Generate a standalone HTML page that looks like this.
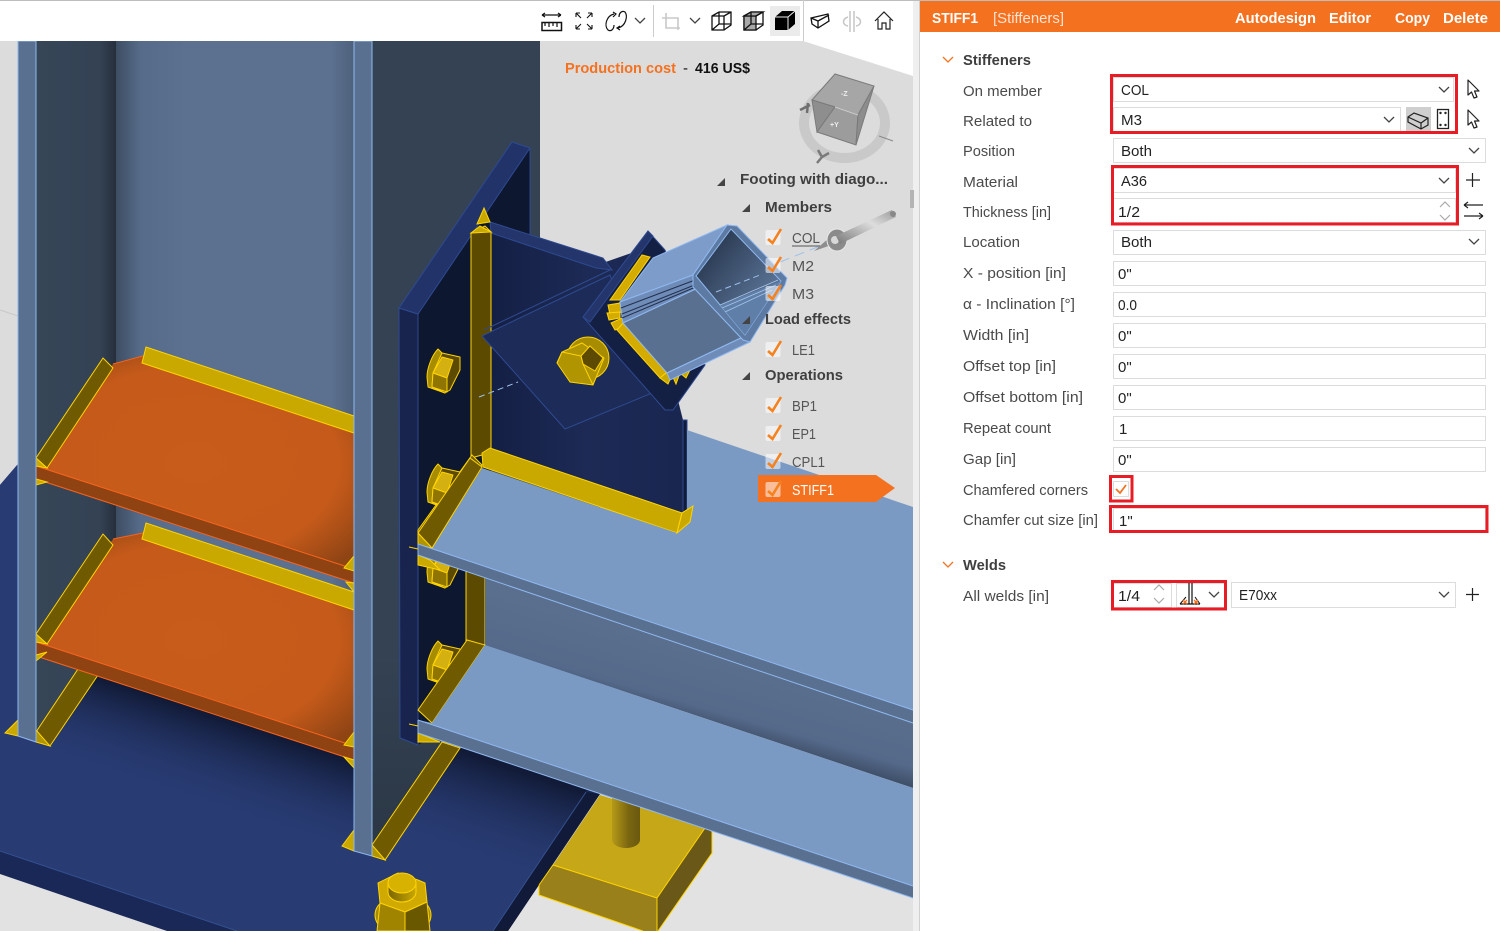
<!DOCTYPE html>
<html><head><meta charset="utf-8"><title>STIFF1</title>
<style>html,body{margin:0;padding:0;background:#fff;width:1500px;height:931px;overflow:hidden}svg{display:block}text{font-family:"Liberation Sans",sans-serif;font-size:15px;fill:#4a4a4a}.b{font-weight:bold}.v{fill:#222}.w{fill:#fff}.t{fill:#555}.h{font-weight:bold;fill:#3f3f3f}</style></head><body>
<svg xmlns="http://www.w3.org/2000/svg" width="1500" height="931" viewBox="0 0 1500 931">
<defs>
<linearGradient id="web" x1="0" x2="1" y1="0" y2="0"><stop offset="0" stop-color="#3d4d62"/><stop offset=".1" stop-color="#566b89"/><stop offset=".3" stop-color="#5c7190"/><stop offset=".9" stop-color="#5c7190"/><stop offset="1" stop-color="#4e617c"/></linearGradient>
<linearGradient id="dk" x1="0" x2="1" y1="0" y2="0"><stop offset="0" stop-color="#364657"/><stop offset=".8" stop-color="#344254"/><stop offset="1" stop-color="#262f3c"/></linearGradient>
<linearGradient id="dk2" gradientUnits="userSpaceOnUse" x1="0" y1="650" x2="0" y2="850"><stop offset="0" stop-color="#344254"/><stop offset="1" stop-color="#2b3745"/></linearGradient>
<radialGradient id="or" cx=".5" cy=".5" r=".65"><stop offset="0" stop-color="#c85c1a"/><stop offset=".7" stop-color="#c55a1a"/><stop offset="1" stop-color="#8f4414"/></radialGradient>
<linearGradient id="shade" gradientUnits="userSpaceOnUse" x1="190" y1="708" x2="162" y2="793"><stop offset="0" stop-color="#111a36"/><stop offset="1" stop-color="#273a70" stop-opacity="0"/></linearGradient>
<linearGradient id="shade2" gradientUnits="userSpaceOnUse" x1="500" y1="763" x2="468" y2="858"><stop offset="0" stop-color="#111a36"/><stop offset="1" stop-color="#273a70" stop-opacity="0"/></linearGradient>
<linearGradient id="wb" gradientUnits="userSpaceOnUse" x1="700" y1="650" x2="680" y2="720"><stop offset="0" stop-color="#5a6f8d"/><stop offset=".75" stop-color="#55698a"/><stop offset="1" stop-color="#3f5069"/></linearGradient>
<linearGradient id="hol" x1="0" x2="1" y1="0" y2="1"><stop offset="0" stop-color="#1d2a40"/><stop offset="1" stop-color="#6f8cb2"/></linearGradient>
<linearGradient id="rod" x1="0" x2="1"><stop offset="0" stop-color="#b59a18"/><stop offset=".6" stop-color="#7a6510"/><stop offset="1" stop-color="#6a5810"/></linearGradient>
<linearGradient id="cyl" x1="0" x2="1"><stop offset="0" stop-color="#7a6400"/><stop offset="1" stop-color="#c9a800"/></linearGradient>
<linearGradient id="gus" x1="0" x2="1" y1="0" y2="0"><stop offset="0" stop-color="#141f44"/><stop offset=".5" stop-color="#1c2a55"/><stop offset="1" stop-color="#192650"/></linearGradient>
<linearGradient id="needle" x1="0" x2="1" y1="1" y2="0"><stop offset="0" stop-color="#777"/><stop offset=".6" stop-color="#ddd"/><stop offset="1" stop-color="#999"/></linearGradient>
<g id="bolt" stroke="#ffd400" stroke-width="1" stroke-linejoin="round">
<path d="M-6 -21 C-12 -15 -17 -2 -17 7 L-16 17 L1 23 L-2 -17 Z" fill="#a88c00"/>
<path d="M-2 -17 L16 -13 L16 0 L6 20 L1 23 L-12 17 L-11 3 Z" fill="#5c4a00"/>
<polygon points="-11,3 -2,-13 9,-10 3,8" fill="#d4b010"/>
<polygon points="-11,3 3,8 3,22 -12,17" fill="#8f7400"/>
</g>
<g id="ck"><rect x="-7.500" y="-7" width="15" height="15" rx="2" fill="#fff" fill-opacity=".55"/><path d="M-5 2 L-.5 6 L8 -8" fill="none" stroke="#f5821f" stroke-width="2.600"/></g>
<path id="chev" d="M0 0 L5 5 L10 0" fill="none" stroke="#444" stroke-width="1.300"/>
<g id="cur"><path d="M0 0 L0 15 L3.500 12 L6 18 L9 17 L6.500 11 L11 11 Z" fill="#fff" stroke="#222" stroke-width="1.200" stroke-linejoin="round"/></g>
</defs>

<!-- viewport background -->
<rect x="0" y="0" width="1500" height="931" fill="#fff"/>
<rect x="0" y="41" width="913" height="890" fill="#dcdcdc"/>
<rect x="0" y="600" width="913" height="331" fill="#e2e2e2"/>
<polygon points="803,41 913,76 913,41" fill="#fff"/>
<path d="M0 310 L18 316" stroke="#c8c8c8" fill="none"/>

<!-- floor plate -->
<polygon points="0,485 18,464 600,464 600,794 508,931 167,931 0,874" fill="#1a2858"/>
<polygon points="0,485 18,464 590,464 586,792 493,931 237,931 0,851" fill="#283b73"/>
<polygon points="36,656 354,760 354,900 36,900" fill="url(#shade)"/>
<polygon points="372,700 600,760 586,792 493,931 372,931" fill="url(#shade2)"/>
<polygon points="586,792 600,794 508,931 493,931" fill="#111a38"/>
<path d="M586 792 L493 931 M0 851 L237 931" stroke="#34508f" fill="none"/>

<!-- anchor block -->
<polygon points="553,865 539,885 539,895 643,931 657,931 657,898" fill="#99801a"/>
<polygon points="600,795 705,828 657,898 553,865" fill="#c6a718"/>
<polygon points="657,898 705,828 712,832 712,853 658,931 657,931" fill="#6a5818"/>
<path d="M553 865 L657 898 L705 828 M657 898 L657 931 M539 885 L539 895 L643 931 M712 832 L712 853 L658 931 M539 885 L553 865" fill="none" stroke="#ffd400"/>
<path d="M612 790 L612 840 A14 8 0 0 0 640 840 L640 790 Z" fill="url(#rod)"/>

<!-- column webs -->
<polygon points="36,41 116,41 116,675 98,675 50,746 36,742" fill="url(#dk)"/>
<polygon points="116,41 354,41 354,750 116,672" fill="url(#web)"/>
<polygon points="372,41 540,41 540,300 470,300 470,740 460,748 385,860 372,856" fill="url(#dk2)"/>
<rect x="372" y="41" width="168" height="620" fill="#344254"/>

<!-- left column foot stiffeners -->
<polygon points="36,732 78,669 98,675 50,746" fill="#6f5a00" stroke="#ffd400"/>
<polygon points="372,845 442,742 460,748 385,860" fill="#6f5a00" stroke="#ffd400"/>
<polygon points="18,720 18,736 5,733" fill="#c9a800" stroke="#ffd400"/>
<polygon points="36,730 50,746 36,742" fill="#b09400" stroke="#ffd400"/>
<polygon points="354,830 354,851 342,846" fill="#c9a800" stroke="#ffd400"/>
<polygon points="372,845 385,860 372,856" fill="#b09400" stroke="#ffd400"/>

<!-- stiffener 2 (lower) -->
<polygon points="36,642 47,644 113,539 143,533 354,610 354,746" fill="url(#or)"/>
<polygon points="36,642 354,746 354,760 36,656" fill="#8f4212" stroke="#f5641e" stroke-width="1"/>
<path d="M113 539 L143 533" stroke="#f5641e"/>
<polygon points="36,634 103,534 113,545 47,644" fill="#6f5a00" stroke="#ffd400"/>
<polygon points="142,539 146,523 354,592 354,610" fill="#c9a800" stroke="#ffd400"/>
<path d="M36 634 L47 644 L36 642 Z M36 655 L47 652 L36 661 Z M354 732 L344 745 L354 747 Z M354 760 L344 757 L354 768 Z" fill="#c9a800" stroke="#ffd400"/>
<path d="M27 645 L36 647 M354 755 L364 757" stroke="#ffd400"/>

<!-- stiffener 1 (upper) -->
<polygon points="36,466 47,468 113,364 143,356 354,433 354,569" fill="url(#or)"/>
<polygon points="36,466 354,569 354,583 36,479" fill="#8f4212" stroke="#f5641e" stroke-width="1"/>
<path d="M113 364 L143 356" stroke="#f5641e"/>
<polygon points="36,458 103,358 113,368 47,468" fill="#6f5a00" stroke="#ffd400"/>
<polygon points="142,363 146,347 354,416 354,433" fill="#c9a800" stroke="#ffd400"/>
<path d="M36 458 L47 468 L36 466 Z M36 479 L47 482 L36 485 Z M354 556 L344 568 L354 571 Z M354 583 L354 592 L346 582 Z" fill="#c9a800" stroke="#ffd400"/>
<path d="M27 468 L36 470 M354 578 L364 581" stroke="#ffd400"/>

<!-- column flanges -->
<polygon points="18,41 36,41 36,742 18,736" fill="#5a7090" stroke="#8fb8f0"/>
<polygon points="354,41 372,41 372,856 354,851" fill="#5a7090" stroke="#8fb8f0"/>

<!-- end plate -->
<polygon points="418,314 530,148 530,240 491,232 491,700 418,745" fill="#0e1730"/>
<polygon points="399,308 418,314 418,745 400,738" fill="#18244e" stroke="#2f4a90"/>
<polygon points="399,308 512,142 530,148 418,314" fill="#22336a" stroke="#2f4a90"/>
<path d="M530 148 L530 240" stroke="#2f4a90"/>

<!-- gusset + yellow verticals -->
<polygon points="491,232 597,265 640,250 683,420 683,513 491,448" fill="url(#gus)"/>
<polygon points="683,420 687,420 687,513 683,520" fill="#111a38" stroke="#2f4a90"/>
<polygon points="490,222 603,258 612,270 596,268 491,233" fill="#24356c" stroke="#2f4a90"/>
<polygon points="471,233 485,226 491,232 491,448 482,455 471,458" fill="#5c4a00" stroke="#ffd400"/>
<polygon points="484,208 490,222 477,224" fill="#c9a800" stroke="#ffd400"/>
<polygon points="471,233 480,226 491,232" fill="#c9a800" stroke="#ffd400"/>
<polygon points="482,336 610,275 652,393 565,429" fill="#1c2b58" stroke="#2f4a90"/>
<path d="M484 330 L610 270" stroke="#2f4a90"/>
<polygon points="583,317 648,231 665,250 705,365 673,410 665,410" fill="#141f44" stroke="#2f4a90"/>
<polygon points="583,317 648,231 653,236 590,322" fill="#24356c" stroke="#2f4a90"/>

<!-- center bolt -->
<ellipse cx="588" cy="358" rx="21" ry="21" fill="#a88c00" stroke="#ffd400"/>
<polygon points="557,363 562,352 582,343 604,358 593,385 570,382" fill="#b09400" stroke="#ffd400"/>
<polygon points="581,356 590,346 603,358 595,371 583,364" fill="#5c4a00" stroke="#ffd400"/>
<path d="M562 352 L581 356 L583 364 L593 385 M562 352 L557 363" stroke="#ffd400" fill="none"/>

<!-- gusset bottom yellow -->
<polygon points="482,453 490,448 682,513 677,533 483,467" fill="#c9a800" stroke="#ffd400"/>
<polygon points="682,513 693,506 690,522 677,533" fill="#c9a800" stroke="#ffd400"/>

<!-- tube welds -->
<polygon points="610,300 642,255 650,257 620,300" fill="#d4ac00" stroke="#ffd400"/>
<polygon points="608,305 620,303 622,312 610,315" fill="#d4ac00" stroke="#ffd400"/>
<polygon points="607,313 620,312 620,318 609,320" fill="#d4ac00" stroke="#ffd400"/>
<polygon points="611,323 622,318 625,326 615,330" fill="#d4ac00" stroke="#ffd400"/>
<polygon points="617,330 623,323 667,373 660,378" fill="#d4ac00" stroke="#ffd400"/>
<path d="M660 378 L668 384 L672 375 L676 384 L680 373 L686 378 L690 370 L672 368 Z" fill="#c9a800" stroke="#ffd400"/>
<!-- tube -->
<polygon points="653,258 727,225 693,275 620,302" fill="#7d9cc9" stroke="#8fb8f0"/>
<polygon points="620,302 693,275 700,287 623,323" fill="#6f8cb8" stroke="#8fb8f0"/>
<path d="M621 308 L695 280 M622 314 L697 284 M622 318 L698 286" stroke="#22304d" stroke-width="1" fill="none"/>
<polygon points="623,323 700,287 743,337 667,373" fill="#5a7090" stroke="#8fb8f0"/>
<polygon points="667,373 743,337 750,342 670,380" fill="#6f8cb8" stroke="#8fb8f0"/>
<polygon points="727,225 737,226 787,278 785,285 750,342 743,340 693,287 693,275" fill="#5d7aa2" stroke="#8fb8f0"/>
<polygon points="696,276 731,229 781,281 745,335" fill="url(#hol)" stroke="#8fb8f0"/>
<polygon points="720,305 781,281 745,335" fill="#5f7ea8"/>
<path d="M720 305 L778 280 M722 308 L776 285 M725 312 L772 290" stroke="#a9c5ea" stroke-width=".8" fill="none"/>
<path d="M716 292 L760 275" stroke="#9fc0ea" stroke-dasharray="6 4" fill="none"/>
<path d="M479 397 L518 382" stroke="#9fc0ea" stroke-dasharray="6 4" fill="none"/>
<path d="M780 262 L840 238" stroke="#9fc0ea" stroke-dasharray="10 6" fill="none"/>

<!-- lower vertical stiffener & lower bolts -->
<polygon points="466,560 485,560 485,650 466,650" fill="#5c4a00" stroke="#ffd400"/>
<polygon points="418,545 418,530 472,455 482,465 432,548" fill="#6f5a00" stroke="#ffd400"/>
<use href="#bolt" x="444" y="370"/>
<use href="#bolt" x="444" y="485"/>
<use href="#bolt" x="444" y="565"/>
<use href="#bolt" x="444" y="662"/>

<!-- beam -->
<polygon points="485,578 913,723 913,788 485,645" fill="url(#wb)"/>
<polygon points="418,720 418,733 440,742 418,742" fill="#c9a800" stroke="#ffd400"/>
<polygon points="418,710 467,640 485,645 432,723" fill="#6f5a00" stroke="#ffd400"/>
<polygon points="418,720 432,723 485,645 913,788 913,886 418,720" fill="#7a9ac4"/>
<polygon points="432,723 485,645 620,690 560,730" fill="#7a9ac4"/>
<polygon points="418,720 913,886 913,898 418,733" fill="#5a7090"/>
<path d="M418 720 L913 886 M418 733 L913 898 M418 720 L418 733" stroke="#8fb8f0" fill="none"/>
<polygon points="418,555 418,565 440,570 430,560" fill="#c9a800" stroke="#ffd400"/>
<polygon points="417,547 432,548 482,468 677,533 687,513 687,430 913,507 913,710" fill="#7a9ac4"/>
<polygon points="418,533 470,458 482,467 432,548" fill="#6f5a00" stroke="#ffd400"/>
<polygon points="418,533 432,548 418,545" fill="#b09400" stroke="#ffd400"/>
<polygon points="418,544 913,710 913,723 418,555" fill="#5a7090"/>
<path d="M418 544 L913 710 M418 555 L913 723 M418 544 L418 555" stroke="#8fb8f0" fill="none"/>
<path d="M409 547 L418 549 M409 724 L418 726" stroke="#ffd400"/>
<polygon points="682,513 693,506 690,522 677,533" fill="#c9a800" stroke="#ffd400"/>

<!-- bottom bolt -->
<ellipse cx="403" cy="915" rx="28" ry="20" fill="#a88c00" stroke="#ffd400"/>
<polygon points="378,883 398,873 418,880 425,883 427,902 405,912 380,903" fill="#d0aa00" stroke="#ffd400"/>
<polygon points="380,903 405,912 405,931 377,931" fill="#a08400" stroke="#ffd400"/>
<polygon points="405,912 427,902 430,931 405,931" fill="#6a5800" stroke="#ffd400"/>
<path d="M388 883 L388 892 A14 10 0 0 0 416 892 L416 883 Z" fill="url(#cyl)" stroke="#ffd400"/>
<ellipse cx="402" cy="883" rx="14" ry="10" fill="#d8b200" stroke="#ffd400"/>

<!-- right edge + toolbar -->
<rect x="913" y="0" width="7" height="931" fill="#efefef"/>
<rect x="910" y="190" width="4" height="18" fill="#b4b4b4"/>
<rect x="919" y="0" width="1" height="931" fill="#d0d0d0"/>
<rect x="0" y="1" width="913" height="40" fill="#fff"/>
<rect x="0" y="0" width="1500" height="1" fill="#bdbdbd"/>
<rect x="653" y="5" width="1" height="32" fill="#ccc"/>
<rect x="803" y="0" width="1" height="41" fill="#ccc"/>
<rect x="770" y="6" width="30" height="30" fill="#ebebeb"/>

<!-- toolbar icons -->
<g fill="none" stroke="#111" stroke-width="1.200">
<path d="M542 15 H561 M542 15 l3 -2 M542 15 l3 2 M561 15 l-3 -2 M561 15 l-3 2"/>
<rect x="542" y="22.500" width="19.500" height="8" stroke-width="1.500"/>
<path d="M545 23 v3 M549 23 v4 M553 23 v3 M557 23 v4"/>
<path d="M576 13 l5 5 M576 13 h4 M576 13 v4 M592 13 l-5 5 M592 13 h-4 M592 13 v4 M576 29 l5 -5 M576 29 h4 M576 29 v-4 M592 29 l-5 -5 M592 29 h-4 M592 29 v-4" stroke-width="1.100"/>
<path d="M614 14 C606 16 604 26 608 30 C611 32 614 29 614 25 M613 12 l3 2 l-3 3"/>
<path d="M618 28 C626 26 628 16 625 12 C622 10 619 13 619 17 M620 30 l-3 -2 l3 -2"/>
</g>
<use href="#chev" x="635" y="18"/>
<g fill="none" stroke="#c8c8c8" stroke-width="1.600"><path d="M662 18 H678 V30 M666 13 V28 H680"/></g>
<use href="#chev" x="690" y="18"/>
<g fill="none" stroke="#111" stroke-width="1.300">
<path d="M712 16 L719 12 H731 V25 L724 30 H712 Z M712 16 H724 V30 M724 16 L731 12 M712 30 L719 24 H731 M719 12 V24"/>
<polygon points="744,16 751,12 763,12 763,25 756,30 744,30" fill="#fff"/>
<polygon points="744,16 756,16 756,30 744,30" fill="#a8a8a8"/>
<polygon points="744,16 751,12 763,12 756,16" fill="#a8a8a8"/>
<path d="M756 16 L763 12 M751 12 V24 H763 M751 24 L744 30"/>
</g>
<polygon points="775,17 782,11 795,11 795,24 788,30 775,30" fill="#000"/>
<path d="M775 17 H788 L795 11 M788 17 V30" stroke="#ebebeb" fill="none"/>
<g fill="none" stroke="#111" stroke-width="1.300"><path d="M811 18 L828 14 L829 21 L818 28 L812 24 Z M811 18 L818 21 L829 15 M818 21 V28"/></g>
<g fill="none" stroke="#c6c6c6" stroke-width="1.500"><path d="M850 11 V32 M854 11 V32"/><path d="M848 17 C842 19 842 25 848 26 M856 17 C862 19 862 25 856 26"/></g>
<g fill="none" stroke="#222" stroke-width="1.200"><path d="M875 21 L884 12 L893 21 M878 19 V29 H882 V23 H886 V29 H890 V19"/></g>

<!-- production cost -->
<text class="b" x="565" y="73" textLength="111" lengthAdjust="spacingAndGlyphs" style="fill:#f47120">Production cost</text>
<text x="683" y="73" style="fill:#111">-</text>
<text class="b" x="695" y="73" textLength="55" lengthAdjust="spacingAndGlyphs" style="fill:#111">416 US$</text>

<!-- gizmo -->
<path fill-rule="evenodd" d="M799 123 A45.500 40 0 1 0 890 123 A45.500 40 0 1 0 799 123 Z M809 123 A35.500 30 0 1 0 880 123 A35.500 30 0 1 0 809 123 Z" fill="#c9c9c9"/>
<polygon points="812,100 835,74 874,86 858,115 835,107" fill="#a6a6a6" stroke="#7a7a7a"/>
<polygon points="812,100 835,107 817,132" fill="#8e8e8e" stroke="#7a7a7a"/>
<polygon points="817,132 835,107 858,115 856,145" fill="#9c9c9c" stroke="#7a7a7a"/>
<polygon points="858,115 874,86 856,145" fill="#8d8d8d" stroke="#7a7a7a"/>
<path d="M835 107 L858 115" stroke="#d0d0d0" fill="none"/>
<path d="M800 110 L810 105 M807 113 L808 103" stroke="#6f6f6f" stroke-width="2.500" fill="none"/>
<path d="M817 163 L822 157 L818 150 M822 157 L829 153" stroke="#7a7a7a" stroke-width="2.500" fill="none"/>
<path d="M879 136 L893 141" stroke="#8a8a8a" fill="none"/>
<text x="841" y="96" style="font-size:7px;fill:#eee;font-weight:bold">-Z</text>
<text x="830" y="127" style="font-size:7px;fill:#eee;font-weight:bold">+Y</text>

<!-- tree -->
<g fill="#444"><path d="M717 186 L725 178 V186 Z M742 212 L750 204 V212 Z M742 324 L750 316 V324 Z M742 380 L750 372 V380 Z"/></g>
<text class="h" x="740" y="184" textLength="148" lengthAdjust="spacingAndGlyphs">Footing with diago...</text>
<text class="h" x="765" y="212" textLength="67" lengthAdjust="spacingAndGlyphs">Members</text>
<text class="t" x="792" y="243" textLength="28" lengthAdjust="spacingAndGlyphs">COL</text>
<path d="M792 246 H820" stroke="#555"/>
<text class="t" x="792" y="271" textLength="22" lengthAdjust="spacingAndGlyphs">M2</text>
<text class="t" x="792" y="299" textLength="22" lengthAdjust="spacingAndGlyphs">M3</text>
<text class="h" x="765" y="324" textLength="86" lengthAdjust="spacingAndGlyphs">Load effects</text>
<text class="t" x="792" y="355" textLength="23" lengthAdjust="spacingAndGlyphs">LE1</text>
<text class="h" x="765" y="380" textLength="78" lengthAdjust="spacingAndGlyphs">Operations</text>
<text class="t" x="792" y="411" textLength="25" lengthAdjust="spacingAndGlyphs">BP1</text>
<text class="t" x="792" y="439" textLength="24" lengthAdjust="spacingAndGlyphs">EP1</text>
<text class="t" x="792" y="467" textLength="33" lengthAdjust="spacingAndGlyphs">CPL1</text>
<polygon points="758,475 876,475 895,488 876,502 758,502" fill="#f47120"/>
<text class="w" x="792" y="495" textLength="42" lengthAdjust="spacingAndGlyphs">STIFF1</text>
<use href="#ck" x="773" y="237"/><use href="#ck" x="773" y="265"/><use href="#ck" x="773" y="293"/>
<use href="#ck" x="773" y="349"/><use href="#ck" x="773" y="405"/><use href="#ck" x="773" y="433"/><use href="#ck" x="773" y="461"/><use href="#ck" x="773" y="489"/>

<!-- needle -->
<polygon points="814,251 836,232 846,240" fill="#8e8e8e"/>
<ellipse cx="837" cy="240" rx="10" ry="11" fill="#8b8b8b" stroke="#e8e8e8"/>
<circle cx="835" cy="240" r="4" fill="#d8d8d8"/>
<polygon points="836,236 892,210 896,217 840,244" fill="url(#needle)"/>
<circle cx="893" cy="214" r="3" fill="#888"/>

<!-- right panel -->
<rect x="920" y="1" width="580" height="930" fill="#fff"/>
<rect x="920" y="1" width="580" height="31" fill="#f47120"/>
<text class="w b" x="932" y="23" textLength="46" lengthAdjust="spacingAndGlyphs">STIFF1</text>
<text x="993" y="23" textLength="71" lengthAdjust="spacingAndGlyphs" style="fill:#fde3d2">[Stiffeners]</text>
<text class="w b" x="1235" y="23" textLength="81" lengthAdjust="spacingAndGlyphs">Autodesign</text>
<text class="w b" x="1329" y="23" textLength="42" lengthAdjust="spacingAndGlyphs">Editor</text>
<text class="w b" x="1395" y="23" textLength="35" lengthAdjust="spacingAndGlyphs">Copy</text>
<text class="w b" x="1443" y="23" textLength="45" lengthAdjust="spacingAndGlyphs">Delete</text>

<path d="M943 57 L948 62 L953 57 M943 562 L948 567 L953 562" fill="none" stroke="#f47120" stroke-width="1.300"/>
<text class="h" x="963" y="65" textLength="68" lengthAdjust="spacingAndGlyphs">Stiffeners</text>
<text class="h" x="963" y="570" textLength="43" lengthAdjust="spacingAndGlyphs">Welds</text>

<text x="963" y="96" textLength="79" lengthAdjust="spacingAndGlyphs">On member</text>
<text x="963" y="126" textLength="69" lengthAdjust="spacingAndGlyphs">Related to</text>
<text x="963" y="156" textLength="52" lengthAdjust="spacingAndGlyphs">Position</text>
<text x="963" y="187" textLength="55" lengthAdjust="spacingAndGlyphs">Material</text>
<text x="963" y="217" textLength="88" lengthAdjust="spacingAndGlyphs">Thickness [in]</text>
<text x="963" y="247" textLength="57" lengthAdjust="spacingAndGlyphs">Location</text>
<text x="963" y="278" textLength="103" lengthAdjust="spacingAndGlyphs">X - position [in]</text>
<text x="963" y="309" textLength="112" lengthAdjust="spacingAndGlyphs">α - Inclination [°]</text>
<text x="963" y="340" textLength="66" lengthAdjust="spacingAndGlyphs">Width [in]</text>
<text x="963" y="371" textLength="93" lengthAdjust="spacingAndGlyphs">Offset top [in]</text>
<text x="963" y="402" textLength="120" lengthAdjust="spacingAndGlyphs">Offset bottom [in]</text>
<text x="963" y="433" textLength="88" lengthAdjust="spacingAndGlyphs">Repeat count</text>
<text x="963" y="464" textLength="53" lengthAdjust="spacingAndGlyphs">Gap [in]</text>
<text x="963" y="495" textLength="125" lengthAdjust="spacingAndGlyphs">Chamfered corners</text>
<text x="963" y="525" textLength="135" lengthAdjust="spacingAndGlyphs">Chamfer cut size [in]</text>
<text x="963" y="601" textLength="86" lengthAdjust="spacingAndGlyphs">All welds [in]</text>

<g fill="#fff" stroke="#dcdcdc" stroke-width="1">
<rect x="1113.500" y="77.500" width="340" height="24"/>
<rect x="1113.500" y="107.500" width="287" height="24"/>
<rect x="1113.500" y="138.500" width="372" height="24"/>
<rect x="1113.500" y="168.500" width="342" height="24"/>
<rect x="1113.500" y="198.500" width="342" height="24"/>
<rect x="1113.500" y="230.500" width="372" height="24"/>
<rect x="1113.500" y="261.500" width="372" height="24"/>
<rect x="1113.500" y="292.500" width="372" height="24"/>
<rect x="1113.500" y="323.500" width="372" height="24"/>
<rect x="1113.500" y="354.500" width="372" height="24"/>
<rect x="1113.500" y="385.500" width="372" height="24"/>
<rect x="1113.500" y="416.500" width="372" height="24"/>
<rect x="1113.500" y="447.500" width="372" height="24"/>
<rect x="1113.500" y="481.500" width="15" height="15"/>
<rect x="1113.500" y="508.500" width="372" height="22"/>
<rect x="1113.500" y="583.500" width="58" height="24"/>
<rect x="1176.500" y="583.500" width="48" height="24"/>
<rect x="1231.500" y="582.500" width="224" height="25"/>
</g>
<path d="M1116 489 L1120 493 L1126 485" fill="none" stroke="#f47120" stroke-width="1.800"/>

<!-- red outlines -->
<g fill="none" stroke="#e81c24" stroke-width="3">
<rect x="1111.500" y="75.500" width="345" height="57"/>
<rect x="1112.500" y="166.500" width="345" height="57.500"/>
<rect x="1110.500" y="476.500" width="21.500" height="24.500"/>
<rect x="1110.500" y="506.500" width="376.500" height="25"/>
<rect x="1112.500" y="581.500" width="113" height="27.500"/>
</g>

<text class="v" x="1121" y="95" textLength="28" lengthAdjust="spacingAndGlyphs">COL</text>
<text class="v" x="1121" y="125" textLength="21" lengthAdjust="spacingAndGlyphs">M3</text>
<text class="v" x="1121" y="156" textLength="31" lengthAdjust="spacingAndGlyphs">Both</text>
<text class="v" x="1121" y="186" textLength="26" lengthAdjust="spacingAndGlyphs">A36</text>
<text class="v" x="1118" y="217" textLength="22" lengthAdjust="spacingAndGlyphs">1/2</text>
<text class="v" x="1121" y="247" textLength="31" lengthAdjust="spacingAndGlyphs">Both</text>
<text class="v" x="1118" y="279">0"</text>
<text class="v" x="1118" y="310" textLength="19" lengthAdjust="spacingAndGlyphs">0.0</text>
<text class="v" x="1118" y="341">0"</text>
<text class="v" x="1118" y="372">0"</text>
<text class="v" x="1118" y="403">0"</text>
<text class="v" x="1119" y="434">1</text>
<text class="v" x="1118" y="465">0"</text>
<text class="v" x="1119" y="526">1"</text>
<text class="v" x="1118" y="601" textLength="22" lengthAdjust="spacingAndGlyphs">1/4</text>
<text class="v" x="1239" y="600" textLength="38" lengthAdjust="spacingAndGlyphs">E70xx</text>

<use href="#chev" x="1439" y="87"/><use href="#chev" x="1384" y="117"/><use href="#chev" x="1469" y="148"/><use href="#chev" x="1439" y="178"/><use href="#chev" x="1469" y="239"/><use href="#chev" x="1209" y="592"/><use href="#chev" x="1439" y="592"/>
<path d="M1440 207 L1445 202 L1450 207 M1440 215 L1445 220 L1450 215 M1154 590 L1159 585 L1164 590 M1154 598 L1159 603 L1164 598" fill="none" stroke="#aaa" stroke-width="1.200"/>

<rect x="1406" y="107" width="25" height="24" fill="#cfcfcf"/>
<g fill="none" stroke="#222" stroke-width="1.200"><path d="M1408 117 L1414 113 L1428 118 V125 L1421 129 L1408 122 Z M1408 117 L1421 123 L1428 118 M1421 123 V129"/></g>
<rect x="1437.500" y="109.500" width="11" height="19" fill="none" stroke="#222" stroke-width="1.300"/>
<g fill="#222"><circle cx="1440.500" cy="113" r="1.200"/><circle cx="1445.500" cy="113" r="1.200"/><circle cx="1440.500" cy="125" r="1.200"/><circle cx="1445.500" cy="125" r="1.200"/></g>
<use href="#cur" x="1468" y="80"/><use href="#cur" x="1468" y="110"/>
<path d="M1472.500 173 V187 M1466 180 H1480 M1472.500 588 V601 M1466 594.500 H1479" stroke="#222" stroke-width="1.200"/>
<path d="M1464 205 H1483 M1464 205 l4 -3 M1464 205 l4 3 M1464 216 H1483 M1483 216 l-4 -3 M1483 216 l-4 3" stroke="#222" stroke-width="1.200" fill="none"/>
<path d="M1189 583 V604 M1192 583 V604 M1180 604 H1200" stroke="#111" stroke-width="1.200" fill="none"/>
<path d="M1186 597 L1180 604 M1195 597 L1200 604" stroke="#111" fill="none"/>
<path d="M1183 600 l4 4 M1187 600 l-4 4 M1194 600 l4 4 M1198 600 l-4 4" stroke="#f47120" stroke-width="1.300" fill="none"/>
</svg>
</body></html>
